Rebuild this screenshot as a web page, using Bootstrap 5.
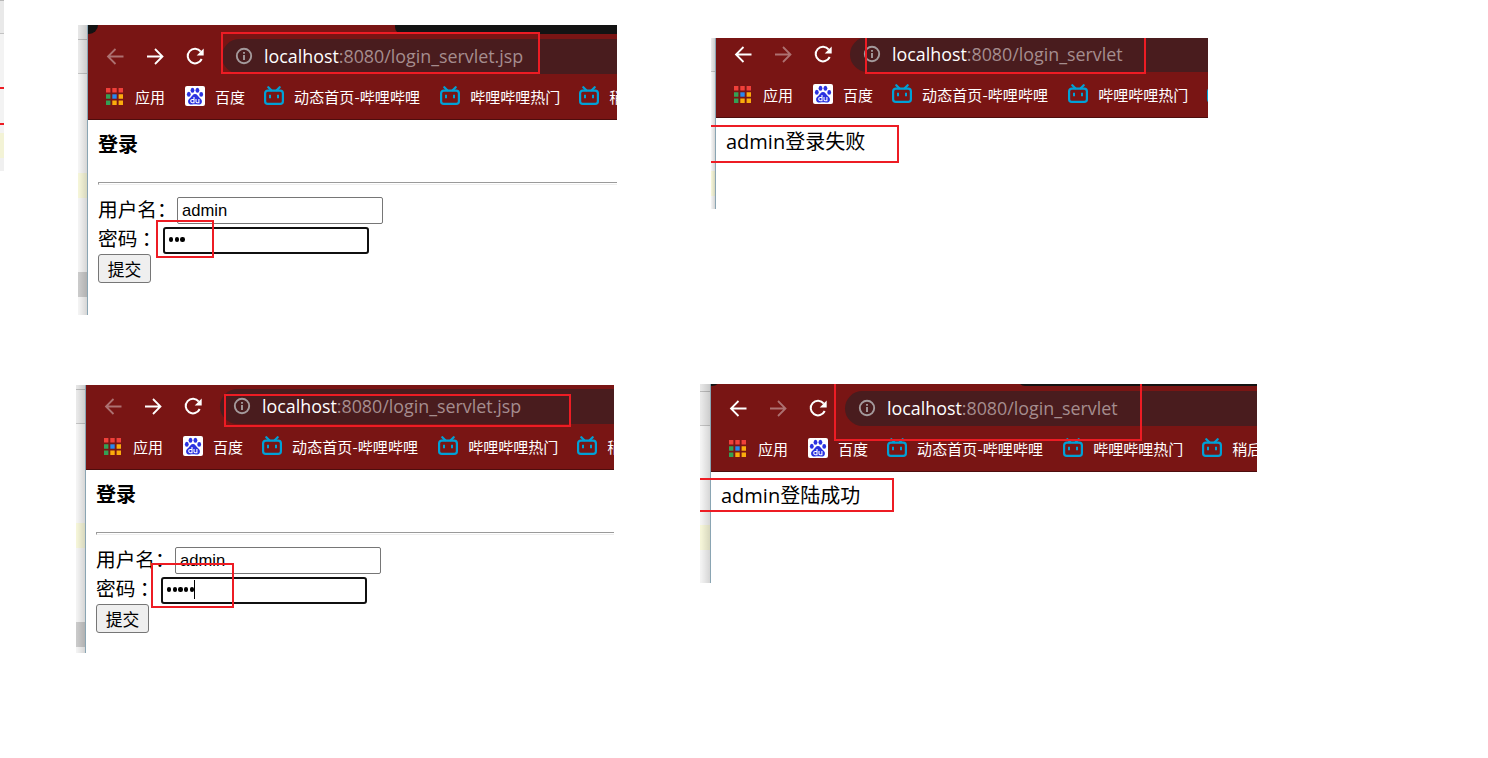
<!DOCTYPE html>
<html lang="zh-CN">
<head>
<meta charset="utf-8">
<meta name="viewport" content="width=device-width, initial-scale=1">
<title>登录</title>
<link rel="stylesheet" href="https://cdn.jsdelivr.net/npm/bootstrap@5.3.0/dist/css/bootstrap.min.css">
<style>
  body { background: #fff; color: #000; font-family: "Open Sans", "Noto Sans CJK SC", sans-serif; overflow: hidden; }
  .row-top { height: 384px; }
  .snip { position: relative; overflow: hidden; flex: none; }
  .snip-edge { width: 4px; height: 171px; }
  .snip-a { width: 539px; height: 290px; margin: 25px 0 0 74px; }
  .snip-b { width: 497px; height: 171px; margin: 38px 0 0 94px; }
  .snip-c { width: 538px; height: 268px; margin: 1px 0 0 76px; }
  .snip-d { width: 557px; height: 199px; margin: 0 0 0 86px; }
  .snip-edge .shot { margin-top: -14px; }
  .snip-b .shot { margin-top: -15px; }
  .snip-c .shot { margin-top: -10px; }
  .snip-d .shot { margin-top: -7px; }
  .shot { height: 310px; }

  /* sliver of the editor window behind the browser */
  .behind { width: 9px; flex: none; background:
    linear-gradient(90deg, rgba(0,0,0,0) 10%, rgba(0,0,0,.12)),
    linear-gradient(#e6e6e6 14px, #b9b9b9 14px, #b9b9b9 15px, #e9e9e9 15px, #e9e9e9 48px, #c3c3c3 48px, #c3c3c3 49px, #f4f4f4 49px, #f4f4f4 148px, #f5f5d8 148px, #f5f5d8 173px, #f3f3f3 173px, #f3f3f3 247px, #cacaca 247px, #cacaca 272px, #f3f3f3 272px); }
  .snip-b .behind { width: 4px; }
  .snip-d .behind { width: 10px; }
  .snip-edge .behind { width: 4px; background:
    linear-gradient(#b9b9b9 15px, #e9e9e9 15px, #e9e9e9 47px, #c3c3c3 47px, #c3c3c3 48px, #f3f3f3 48px, #f3f3f3 147px, #f3f3d6 147px, #f3f3d6 172px, #f0f0f0 172px); }

  .browser { border-left: 1px solid #8aa5b3; min-width: 0; }
  .tabstrip { height: 9px; background: #791514; }
  .tab-gap { background: #131313; }
  .tab-gap.first { width: 10px; border-bottom-right-radius: 9px; }
  .tab-gap.rest { margin-left: 297px; border-bottom-left-radius: 7px; }
  .toolbar { height: 40px; padding: 5px 0 0 17px; background: #791514; }
  .tool { width: 20px; height: 20px; margin-right: 20px; flex: none; color: #fff; }
  .tool.off { color: #ad7171; }
  .tool.last { margin-right: 17px; }
  .omnibox { height: 35px; padding-left: 13px; background: #491c1e; border-radius: 18px 0 0 18px; }
  .info { width: 18px; height: 18px; margin: -1px 11px 0 0; color: #a49a9c; flex: none; }
  .url { font-size: 17.85px; line-height: 35px; color: #a58d8e; white-space: nowrap; }
  .url b { font-weight: 400; color: #fff; }
  .bookmarks { height: 46px; padding: 0 0 1px 18px; background: #791514; border-bottom: 1px solid #4d0d0d; overflow: hidden; }
  .bm { color: #fff; font: 15px/20px "Noto Sans CJK SC", sans-serif; white-space: nowrap; gap: 10px; margin-right: 20px; flex: none; }
  .bm span { padding-top: 1px; }
  .bm:nth-child(2) { margin-right: 19px; }
  .bm:nth-child(3) span { letter-spacing: .1px; }
  .bm:nth-child(4) { margin-right: 19px; }
  .bm svg { width: 20px; height: 20px; flex: none; }
  .bm .apps { width: 17px; height: 17px; margin-right: 2px; }

  .doc { padding: 10px 0 0 10px; }
  .doc h3 { font: bold 20px/27px "Noto Sans CJK SC", sans-serif; margin: 0; }
  .rule { height: 3px; margin: 25px 0 12px; border: 1px solid; border-color: #9a9a9a #eee #eee #9a9a9a; border-right: 0; }
  .field { font: 19.7px/23px "Noto Sans CJK SC", sans-serif; height: 27px; white-space: pre; }
  .field + .field { margin-top: 3px; }
  .field label { flex: none; }
  .lab-user { width: 79px; }
  .lab-pass { width: 65px; line-height: 21px; }
  .box { width: 206px; height: 27px; padding: 0 4px; border: 1px solid #767676; border-radius: 2px; font: 16.6px/25px "Liberation Sans", sans-serif; background: #fff; color: #000; outline: 0; }
  .box.focused { border: 2px solid #101010; border-radius: 3px; padding-bottom: 2px; }
  .dots i { width: 4.4px; height: 4.4px; margin-right: 1.3px; border-radius: 50%; background: #000; }
  .caret { width: 1px; height: 19px; margin-left: -1px; background: #000; }
  .send { width: 53px; height: 29px; padding: 0; border: 1px solid #767676; border-radius: 3px; background: #efefef; color: #000; font: 16.8px/26px "Noto Sans CJK SC", sans-serif; }
  .result { font-size: 20px; line-height: 27px; white-space: nowrap; }

  /* red annotation frames laid over the screenshots */
  .mark-box { position: absolute; border: 2px solid #ed1c24; }
  .snip-edge .mark-box { left: -10px; width: 30px; top: 87px; height: 38px; }
  .snip-a .m1 { left: 143px; top: 7px; width: 319px; height: 42px; }
  .snip-a .m2 { left: 78px; top: 195px; width: 58px; height: 38px; }
  .snip-b .m1 { left: 154px; top: -10px; width: 281px; height: 46px; }
  .snip-b .m2 { left: -10px; top: 87px; width: 198px; height: 38px; }
  .snip-c .m1 { left: 148px; top: 9px; width: 347px; height: 33px; }
  .snip-c .m2 { left: 75px; top: 178px; width: 83px; height: 45px; }
  .snip-d .m1 { left: 134px; top: -10px; width: 308px; height: 67px; }
  .snip-d .m2 { left: -10px; top: 94px; width: 204px; height: 34px; }
</style>
</head>
<body>
<svg class="d-none">
  <symbol id="back" viewBox="0 0 20 20"><path d="M18.500 9.500H3.500M10.500 2 3 9.500l7.500 7.500" fill="none" stroke="currentColor" stroke-width="1.800"/></symbol>
  <symbol id="fwd" viewBox="0 0 20 20"><path d="M2 9.500h15M10 2l7.500 7.500L10 17" fill="none" stroke="currentColor" stroke-width="1.800"/></symbol>
  <symbol id="reload" viewBox="0 0 20 20"><path d="M15.800 4.600A7.300 7.300 0 1 0 16.700 12" fill="none" stroke="currentColor" stroke-width="2"/><path d="M18.700 1.500v7h-7z" fill="currentColor"/></symbol>
  <symbol id="info" viewBox="0 0 18 18"><circle cx="9" cy="9" r="7.200" fill="none" stroke="currentColor" stroke-width="1.900"/><path d="M9 8v5M9 5v1.800" stroke="currentColor" stroke-width="1.900"/></symbol>
  <symbol id="apps" viewBox="0 0 17 17">
    <path d="M0 0h4.400v4.400H0zM6.300 0h4.400v4.400H6.300zM12.600 0H17v4.400h-4.400z" fill="#f0403a"/>
    <path d="M0 6.300h4.400v4.400H0zM0 12.600h4.400V17H0z" fill="#34a055"/>
    <path d="M6.300 6.300h4.400v4.400H6.300z" fill="#2787f0"/>
    <path d="M12.600 6.300H17v4.400h-4.400zM6.300 12.600h4.400V17H6.300zM12.600 12.600H17V17h-4.400z" fill="#fbac0c"/>
  </symbol>
  <symbol id="baidu" viewBox="0 0 20 20">
    <rect width="20" height="20" rx="2" fill="#fff"/>
    <g fill="#2a32e0"><ellipse cx="3.800" cy="8.300" rx="1.900" ry="2.500"/><ellipse cx="7.500" cy="4.200" rx="1.900" ry="2.500"/><ellipse cx="12.400" cy="4.200" rx="1.900" ry="2.500"/><ellipse cx="16.200" cy="8.400" rx="1.900" ry="2.400"/>
    <path d="M10 8c2.200 0 2.800 2 4.300 3.500 1.600 1.400 2.900 2.500 2.600 4.400-.4 2.300-2.200 2.800-4.100 2.500-1.900-.3-3.700-.3-5.600 0-1.800.3-3.700-.2-4.100-2.500-.3-1.900 1-3 2.600-4.400C7.200 10 7.800 8 10 8z"/></g>
    <path d="M9 11v5.700H7.300a1.600 1.600 0 0 1 0-3.200H9M11 13v2.500c0 .8.400 1.200 1 1.200h1.900V13" fill="none" stroke="#fff" stroke-width="1.100"/>
  </symbol>
  <symbol id="bili" viewBox="0 0 20 20"><g fill="none" stroke="#00a1d6" stroke-width="2.200"><rect x="1.100" y="4.600" width="17.800" height="13.300" rx="2.700"/><path d="M4.300 1.200l3 3M15.700 1.200l-3 3" stroke-linecap="round"/></g><path d="M5 8.700h2v3.500H5zM13 8.700h2v3.500h-2z" fill="#00a1d6"/></symbol>
</svg>

<div class="row-top d-flex align-items-start">
  <div class="snip snip-edge"><div class="shot d-flex"><div class="behind"></div></div><div class="mark-box"></div></div>

  <section class="snip snip-a">
    <div class="shot d-flex">
      <div class="behind"></div>
      <div class="browser flex-grow-1">
        <div class="tabstrip d-flex"><div class="tab-gap first"></div><div class="tab-gap rest flex-grow-1"></div></div>
        <div class="toolbar d-flex align-items-center">
          <svg class="tool off"><use href="#back"/></svg><svg class="tool"><use href="#fwd"/></svg><svg class="tool last"><use href="#reload"/></svg>
          <div class="omnibox d-flex align-items-center flex-grow-1"><svg class="info"><use href="#info"/></svg><div class="url"><b>localhost</b>:8080/login_servlet.jsp</div></div>
        </div>
        <nav class="bookmarks d-flex align-items-center">
          <div class="bm d-flex align-items-center"><svg class="apps"><use href="#apps"/></svg><span>应用</span></div>
          <div class="bm d-flex align-items-center"><svg><use href="#baidu"/></svg><span>百度</span></div>
          <div class="bm d-flex align-items-center"><svg><use href="#bili"/></svg><span>动态首页-哔哩哔哩</span></div>
          <div class="bm d-flex align-items-center"><svg><use href="#bili"/></svg><span>哔哩哔哩热门</span></div>
          <div class="bm d-flex align-items-center"><svg><use href="#bili"/></svg><span>稍</span></div>
        </nav>
        <main class="doc">
          <h3>登录</h3>
          <div class="rule"></div>
          <div class="field d-flex"><label class="lab-user">用户名：</label><div class="box">admin</div></div>
          <div class="field d-flex"><label class="lab-pass">密码 ：</label><div class="box focused dots d-flex align-items-center"><i></i><i></i><i></i></div></div>
          <button class="send d-block" type="button">提交</button>
        </main>
      </div>
    </div>
    <div class="mark-box m1"></div><div class="mark-box m2"></div>
  </section>

  <section class="snip snip-b">
    <div class="shot d-flex">
      <div class="behind"></div>
      <div class="browser flex-grow-1">
        <div class="tabstrip d-flex"><div class="tab-gap first"></div><div class="tab-gap rest flex-grow-1"></div></div>
        <div class="toolbar d-flex align-items-center">
          <svg class="tool"><use href="#back"/></svg><svg class="tool off"><use href="#fwd"/></svg><svg class="tool last"><use href="#reload"/></svg>
          <div class="omnibox d-flex align-items-center flex-grow-1"><svg class="info"><use href="#info"/></svg><div class="url"><b>localhost</b>:8080/login_servlet</div></div>
        </div>
        <nav class="bookmarks d-flex align-items-center">
          <div class="bm d-flex align-items-center"><svg class="apps"><use href="#apps"/></svg><span>应用</span></div>
          <div class="bm d-flex align-items-center"><svg><use href="#baidu"/></svg><span>百度</span></div>
          <div class="bm d-flex align-items-center"><svg><use href="#bili"/></svg><span>动态首页-哔哩哔哩</span></div>
          <div class="bm d-flex align-items-center"><svg><use href="#bili"/></svg><span>哔哩哔哩热门</span></div>
          <div class="bm d-flex align-items-center"><svg><use href="#bili"/></svg></div>
        </nav>
        <main class="doc"><div class="result">admin登录失败</div></main>
      </div>
    </div>
    <div class="mark-box m1"></div><div class="mark-box m2"></div>
  </section>
</div>

<div class="d-flex align-items-start">
  <section class="snip snip-c">
    <div class="shot d-flex">
      <div class="behind"></div>
      <div class="browser flex-grow-1">
        <div class="tabstrip d-flex"></div>
        <div class="toolbar d-flex align-items-center">
          <svg class="tool off"><use href="#back"/></svg><svg class="tool"><use href="#fwd"/></svg><svg class="tool last"><use href="#reload"/></svg>
          <div class="omnibox d-flex align-items-center flex-grow-1"><svg class="info"><use href="#info"/></svg><div class="url"><b>localhost</b>:8080/login_servlet.jsp</div></div>
        </div>
        <nav class="bookmarks d-flex align-items-center">
          <div class="bm d-flex align-items-center"><svg class="apps"><use href="#apps"/></svg><span>应用</span></div>
          <div class="bm d-flex align-items-center"><svg><use href="#baidu"/></svg><span>百度</span></div>
          <div class="bm d-flex align-items-center"><svg><use href="#bili"/></svg><span>动态首页-哔哩哔哩</span></div>
          <div class="bm d-flex align-items-center"><svg><use href="#bili"/></svg><span>哔哩哔哩热门</span></div>
          <div class="bm d-flex align-items-center"><svg><use href="#bili"/></svg><span>稍</span></div>
        </nav>
        <main class="doc">
          <h3>登录</h3>
          <div class="rule"></div>
          <div class="field d-flex"><label class="lab-user">用户名：</label><div class="box">admin</div></div>
          <div class="field d-flex"><label class="lab-pass">密码 ：</label><div class="box focused dots d-flex align-items-center"><i></i><i></i><i></i><i></i><i></i><span class="caret"></span></div></div>
          <button class="send d-block" type="button">提交</button>
        </main>
      </div>
    </div>
    <div class="mark-box m1"></div><div class="mark-box m2"></div>
  </section>

  <section class="snip snip-d">
    <div class="shot d-flex">
      <div class="behind"></div>
      <div class="browser flex-grow-1">
        <div class="tabstrip d-flex"><div class="tab-gap first"></div><div class="tab-gap rest flex-grow-1"></div></div>
        <div class="toolbar d-flex align-items-center">
          <svg class="tool"><use href="#back"/></svg><svg class="tool off"><use href="#fwd"/></svg><svg class="tool last"><use href="#reload"/></svg>
          <div class="omnibox d-flex align-items-center flex-grow-1"><svg class="info"><use href="#info"/></svg><div class="url"><b>localhost</b>:8080/login_servlet</div></div>
        </div>
        <nav class="bookmarks d-flex align-items-center">
          <div class="bm d-flex align-items-center"><svg class="apps"><use href="#apps"/></svg><span>应用</span></div>
          <div class="bm d-flex align-items-center"><svg><use href="#baidu"/></svg><span>百度</span></div>
          <div class="bm d-flex align-items-center"><svg><use href="#bili"/></svg><span>动态首页-哔哩哔哩</span></div>
          <div class="bm d-flex align-items-center"><svg><use href="#bili"/></svg><span>哔哩哔哩热门</span></div>
          <div class="bm d-flex align-items-center"><svg><use href="#bili"/></svg><span>稍后</span></div>
        </nav>
        <main class="doc"><div class="result">admin登陆成功</div></main>
      </div>
    </div>
    <div class="mark-box m1"></div><div class="mark-box m2"></div>
  </section>
</div>
<script src="https://cdn.jsdelivr.net/npm/bootstrap@5.3.0/dist/js/bootstrap.bundle.min.js"></script>
</body>
</html>
